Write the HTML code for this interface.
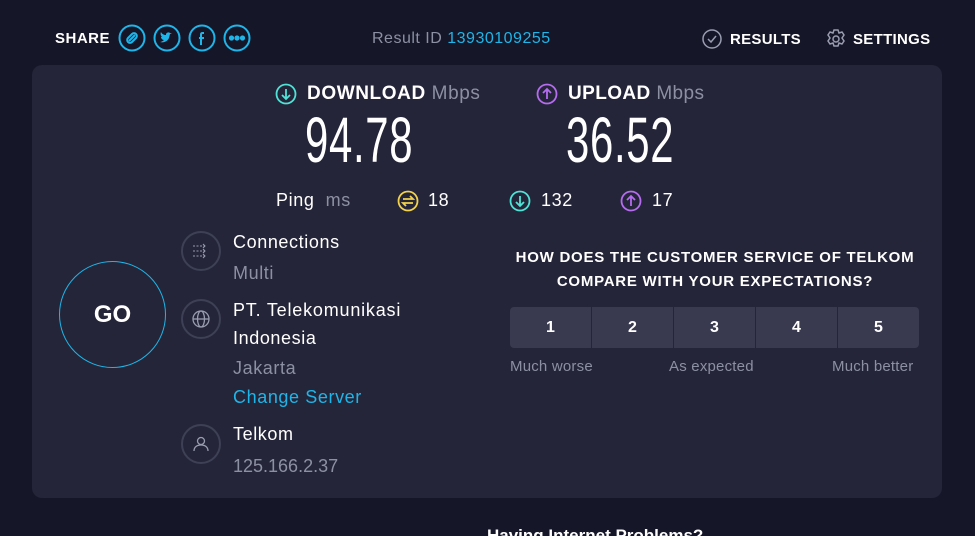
<!DOCTYPE html>
<html style="width:975px;height:536px;overflow:hidden"><head><meta charset="utf-8"><style>
*{margin:0;padding:0;box-sizing:border-box}
body{width:975px;height:536px;background:#151628;font-family:"Liberation Sans",sans-serif;color:#fff;position:relative;overflow:hidden}
.a{position:absolute;white-space:nowrap}
.b{font-weight:bold}
.panel{position:absolute;left:32px;top:65px;width:910px;height:433px;background:#242538;border-radius:10px}
.ic{position:absolute;width:40px;height:40px;border:2px solid #3e4055;border-radius:50%}
.num{font-family:"Liberation Sans",sans-serif;font-size:64px;font-weight:normal;color:#fff;transform-origin:left top;transform:scaleX(.655);letter-spacing:1px}
.seg{position:absolute;top:307px;height:41px;width:81px;background:#393a50;text-align:center;line-height:41px;font-size:16px;font-weight:bold}
.g{color:#8d8fa3}
.t{font-size:18px;letter-spacing:.6px}
</style></head><body>
<div class="a b" style="left:55px;top:30px;font-size:15px;letter-spacing:.5px">SHARE</div>
<svg class="a" style="left:118px;top:24px" width="135" height="28" viewBox="0 0 135 28" fill="none" stroke="#1fb5e8" stroke-width="2">
<circle cx="14" cy="14" r="12.5"/><path d="M11 17l6-6M12 12l-2 2a2.5 2.5 0 0 0 4 4l2-2M16 16l2-2a2.5 2.5 0 0 0-4-4l-2 2"/>
<circle cx="49" cy="14" r="12.5"/><path d="M42 18c3 1 7 0 9-4l1-4 2-1-2 0c-1-1-3-1-4 1v1c-2 0-4-1-5-3-1 2 0 4 1 5h-1c0 1 1 3 3 3-1 1-3 2-4 2z" fill="#1fb5e8" stroke="none"/>
<circle cx="84" cy="14" r="12.5"/><path d="M86 9h-1.5c-1 0-1.5.5-1.5 1.5V21M81 14h5" />
<circle cx="119" cy="14" r="12.5"/><circle cx="113.5" cy="14" r="1.6" fill="#1fb5e8"/><circle cx="119" cy="14" r="1.6" fill="#1fb5e8"/><circle cx="124.5" cy="14" r="1.6" fill="#1fb5e8"/>
</svg>
<div class="a" style="left:372px;top:30px;font-size:16px;letter-spacing:.5px;color:#8d8fa3">Result ID <span style="color:#1fb5e8">13930109255</span></div>
<svg class="a" style="left:702px;top:29px" width="20" height="20" fill="none" stroke="#9a9cb0" stroke-width="1.5"><circle cx="10" cy="10" r="9"/><path d="M6 10l3 3 5-6"/></svg>
<div class="a b" style="left:730px;top:31px;font-size:15px;letter-spacing:.3px">RESULTS</div>
<svg class="a" style="left:826px;top:29px" width="20" height="20" fill="none" stroke="#9a9cb0" stroke-width="1.5"><path d="M8 1h4l1 3 3-1 2 3-2 3 2 3-2 3-3-1-1 3H8l-1-3-3 1-2-3 2-3-2-3 2-3 3 1z"/><circle cx="10" cy="10" r="3"/></svg>
<div class="a b" style="left:853px;top:31px;font-size:15px;letter-spacing:.3px">SETTINGS</div>

<div class="panel"></div>
<svg class="a" style="left:275px;top:83px" width="22" height="22" fill="none" stroke="#4fe3d7" stroke-width="1.8"><circle cx="11" cy="11" r="9.5"/><path d="M11 6v10M7 12l4 4 4-4"/></svg>
<div class="a b" style="left:307px;top:83px;font-size:19px;letter-spacing:.6px">DOWNLOAD <span class="g" style="font-weight:normal">Mbps</span></div>
<div class="a num" style="left:305px;top:103px">94.78</div>
<svg class="a" style="left:536px;top:83px" width="22" height="22" fill="none" stroke="#b56cf0" stroke-width="1.8"><circle cx="11" cy="11" r="9.5"/><path d="M11 16V6M7 10l4-4 4 4"/></svg>
<div class="a b" style="left:568px;top:83px;font-size:19px;letter-spacing:.4px">UPLOAD <span class="g" style="font-weight:normal">Mbps</span></div>
<div class="a num" style="left:566px;top:103px">36.52</div>

<div class="a t" style="left:276px;top:190px">Ping <span class="g">&nbsp;ms</span></div>
<svg class="a" style="left:397px;top:190px" width="22" height="22" fill="none" stroke="#f2d24b" stroke-width="1.8"><circle cx="11" cy="11" r="9.5"/><path d="M6 9h10l-3-3M16 13H6l3 3"/></svg>
<div class="a t" style="left:428px;top:190px">18</div>
<svg class="a" style="left:509px;top:190px" width="22" height="22" fill="none" stroke="#4fe3d7" stroke-width="1.8"><circle cx="11" cy="11" r="9.5"/><path d="M11 6v10M7 12l4 4 4-4"/></svg>
<div class="a t" style="left:541px;top:190px">132</div>
<svg class="a" style="left:620px;top:190px" width="22" height="22" fill="none" stroke="#b56cf0" stroke-width="1.8"><circle cx="11" cy="11" r="9.5"/><path d="M11 16V6M7 10l4-4 4 4"/></svg>
<div class="a t" style="left:652px;top:190px">17</div>

<div class="a" style="left:59px;top:261px;width:107px;height:107px;border:1.5px solid #1fb5e8;border-radius:50%"></div>
<div class="a b" style="left:59px;top:301px;width:107px;text-align:center;font-size:24px">GO</div>

<div class="ic" style="left:181px;top:231px"></div>
<svg class="a" style="left:191px;top:241px" width="20" height="20" fill="none" stroke="#9a9cb0" stroke-width="1"><path d="M2 5h12M2 10h12M2 15h12" stroke-dasharray="2 1.5"/><path d="M12 3l2 2-2 2M12 8l2 2-2 2M12 13l2 2-2 2"/></svg>
<div class="a t" style="left:233px;top:232px">Connections</div>
<div class="a g t" style="left:233px;top:263px">Multi</div>
<div class="ic" style="left:181px;top:299px"></div>
<svg class="a" style="left:191px;top:309px" width="20" height="20" fill="none" stroke="#9a9cb0" stroke-width="1.3"><circle cx="10" cy="10" r="8"/><ellipse cx="10" cy="10" rx="3.5" ry="8"/><path d="M2 10h16"/></svg>
<div class="a t" style="left:233px;top:300px;letter-spacing:.8px">PT. Telekomunikasi</div>
<div class="a t" style="left:233px;top:328px">Indonesia</div>
<div class="a g t" style="left:233px;top:358px">Jakarta</div>
<div class="a t" style="left:233px;top:387px;color:#1fb5e8">Change Server</div>
<div class="ic" style="left:181px;top:424px"></div>
<svg class="a" style="left:191px;top:434px" width="20" height="20" fill="none" stroke="#9a9cb0" stroke-width="1.3"><circle cx="10" cy="7" r="3.5"/><path d="M3 17c0-4 3-6 7-6s7 2 7 6"/></svg>
<div class="a t" style="left:233px;top:424px">Telkom</div>
<div class="a g t" style="left:233px;top:456px;letter-spacing:0">125.166.2.37</div>

<div class="a b" style="left:500px;top:246px;width:430px;text-align:center;font-size:15px;line-height:24px;letter-spacing:.75px">HOW DOES THE CUSTOMER SERVICE OF TELKOM<br>COMPARE WITH YOUR EXPECTATIONS?</div>
<div class="seg" style="left:510px;border-radius:4px 0 0 4px">1</div>
<div class="seg" style="left:592px">2</div>
<div class="seg" style="left:674px">3</div>
<div class="seg" style="left:756px">4</div>
<div class="seg" style="left:838px;border-radius:0 4px 4px 0">5</div>
<div class="a g" style="left:510px;top:358px;font-size:15px;letter-spacing:.2px">Much worse</div>
<div class="a g" style="left:669px;top:358px;font-size:15px;letter-spacing:.2px">As expected</div>
<div class="a g" style="left:832px;top:358px;font-size:15px;letter-spacing:.2px">Much better</div>
<div class="a b" style="left:487px;top:526px;font-size:17px">Having Internet Problems?</div>
</body></html>
